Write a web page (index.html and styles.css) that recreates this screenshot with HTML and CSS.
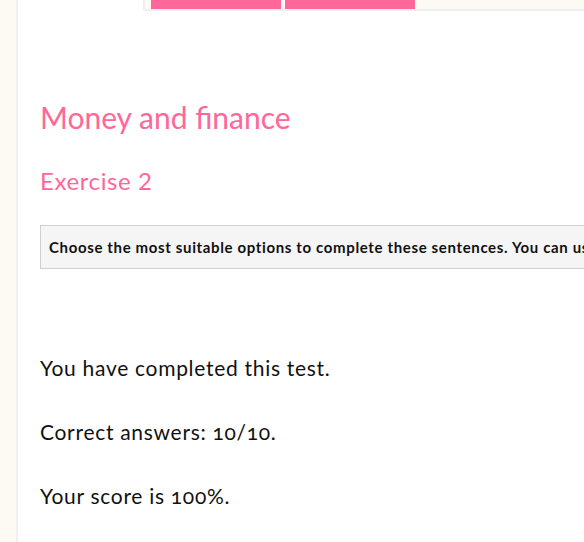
FILE: index.html
```html
<!DOCTYPE html>
<html>
<head>
<meta charset="utf-8">
<link rel="stylesheet" href="styles.css">
</head>
<body>
<div class="page">
  <aside class="strip"></aside>
  <main class="content">
    <nav class="tabs">
      <span class="tab"></span>
      <span class="tab"></span>
    </nav>
    <h1 class="title">Money and finance</h1>
    <h2 class="subtitle">Exercise 2</h2>
    <div class="instructions">Choose the most suitable options to complete these sentences. You can use a dictionary to help you.</div>
    <div class="result">
      <p>You have completed this test.</p>
      <p>Correct answers: 10/10.</p>
      <p>Your score is 100%.</p>
    </div>
  </main>
</div>
</body>
</html>
```
FILE: styles.css
```css
html, body {
  margin: 0;
  padding: 0;
  background: #fff;
}
body {
  font-family: Lato, "Open Sans", sans-serif;
  color: #111;
  overflow: hidden;
  width: 584px;
  height: 542px;
}
.page {
  display: flex;
  height: 542px;
}
.strip {
  width: 16px;
  flex: none;
  background: #fdf9f3;
  border-right: 2px solid #f1efeb;
}
.content {
  flex: 1;
  min-width: 0;
  padding-left: 22px;
  overflow: hidden;
}
.tabs {
  display: flex;
  gap: 4px;
  margin-left: 103px;
  height: 9px;
  padding-left: 6px;
  background: #fdf9f3;
  border-left: 2px solid #efefef;
  border-bottom: 2px solid #efefef;
}
.tab {
  width: 130px;
  height: 9px;
  background: #ff6699;
}
.title {
  margin: 88px 0 0 0;
  font-size: 30px;
  font-weight: 400;
  color: #ff6699;
  line-height: 1.2;
}
.subtitle {
  margin: 32px 0 0 0;
  font-size: 24px;
  font-weight: 400;
  color: #ff6699;
  line-height: 1.2;
  letter-spacing: 0.6px;
}
.instructions {
  margin-top: 29px;
  width: 700px;
  box-sizing: border-box;
  padding: 12px 8px;
  background: #f5f5f5;
  border: 1px solid #cfcfcf;
  font-size: 15px;
  font-weight: 700;
  letter-spacing: 0.64px;
  white-space: nowrap;
  line-height: 18px;
}
.result {
  margin-top: 86px;
}
.result p {
  margin: 0 0 39px 0;
  font-size: 21px;
  line-height: 25px;
  letter-spacing: 0.7px;
  font-variant-numeric: oldstyle-nums;
}
```
